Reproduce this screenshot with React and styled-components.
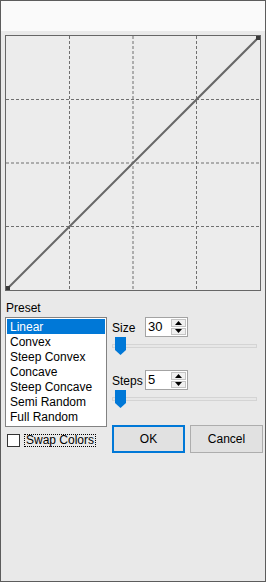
import React from "react";
import styled, { createGlobalStyle } from "styled-components";

const GlobalStyle = createGlobalStyle`
	html, body {
		margin: 0;
		padding: 0;
		background: #e9e9e9;
	}
	* {
		box-sizing: border-box;
	}
`;

const presets = [
	"Linear",
	"Convex",
	"Steep Convex",
	"Concave",
	"Steep Concave",
	"Semi Random",
	"Full Random",
];

// Curve preview (inner area is 254 x 254)
const CurveGraph = () => {
	const q = [63.5, 127, 190.5];
	return (
		<Graph>
			<svg width="254" height="254" viewBox="0 0 254 254">
				{q.map((v) => (
					<g key={v} stroke="#6f6f6f" strokeWidth="1" strokeDasharray="3 2">
						<line x1={v} y1="0" x2={v} y2="254" />
						<line x1="0" y1={v} x2="254" y2={v} />
					</g>
				))}
				<line x1="2" y1="252" x2="252" y2="2" stroke="#676767" strokeWidth="2" />
				<rect x="0" y="250" width="4" height="4" fill="#3a3a3a" />
				<rect x="250" y="0" width="4" height="4" fill="#3a3a3a" />
			</svg>
		</Graph>
	);
};

const Spinner = ({ value }) => (
	<SpinBox>
		<SpinValue>{value}</SpinValue>
		<SpinButtons>
			<SpinButton>
				<svg width="7" height="4" viewBox="0 0 7 4">
					<polygon points="0,4 7,4 3.5,0" fill="#000" />
				</svg>
			</SpinButton>
			<SpinButton>
				<svg width="7" height="4" viewBox="0 0 7 4">
					<polygon points="0,0 7,0 3.5,4" fill="#000" />
				</svg>
			</SpinButton>
		</SpinButtons>
	</SpinBox>
);

const Slider = () => (
	<SliderRow>
		<Track />
		<Thumb>
			<svg width="11" height="18" viewBox="0 0 11 18">
				<polygon points="0,0 11,0 11,13 5.5,18 0,13" fill="#0078d7" />
			</svg>
		</Thumb>
	</SliderRow>
);

const App = () => {
	return (
		<>
			<GlobalStyle />
			<Window>
				<TitleBar />
				<Body>
					<CurveGraph />
					<Lower>
						<LeftColumn>
							<Label>Preset</Label>
							<ListBox>
								{presets.map((p, i) => (
									<ListItem key={p} selected={i === 0}>
										{p}
									</ListItem>
								))}
							</ListBox>
							<CheckRow>
								<CheckBox />
								<FocusLabel>Swap Colors</FocusLabel>
							</CheckRow>
						</LeftColumn>
						<RightColumn>
							<FieldRow>
								<FieldLabel>Size</FieldLabel>
								<Spinner value="30" />
							</FieldRow>
							<Slider />
							<FieldRow spaced>
								<FieldLabel>Steps</FieldLabel>
								<Spinner value="5" />
							</FieldRow>
							<Slider />
							<Buttons>
								<Button primary>OK</Button>
								<Button>Cancel</Button>
							</Buttons>
						</RightColumn>
					</Lower>
				</Body>
			</Window>
		</>
	);
};

const Window = styled.div`
	width: 266px;
	height: 582px;
	border: 1px solid #5c5c5c;
	display: flex;
	flex-direction: column;
	font-family: "Liberation Sans", Arial, sans-serif;
	font-size: 12px;
	color: #000;
	background: #e9e9e9;
`;

const TitleBar = styled.div`
	height: 30px;
	background: #fafafa;
`;

const Body = styled.div`
	flex: 1;
	padding: 4px 0 0 4px;
	display: flex;
	flex-direction: column;
`;

const Graph = styled.div`
	width: 256px;
	height: 256px;
	border: 1px solid #666;
	background: #ececec;
	svg {
		display: block;
	}
`;

const Lower = styled.div`
	display: flex;
	gap: 5px;
	margin-top: 10px;
`;

const LeftColumn = styled.div`
	width: 102px;
	display: flex;
	flex-direction: column;
`;

const Label = styled.div`
	line-height: 14px;
	height: 14px;
	padding-left: 1px;
	margin-bottom: 2px;
`;

const ListBox = styled.div`
	height: 110px;
	border: 1px solid #828282;
	background: #fff;
	padding: 1px;
`;

const ListItem = styled.div`
	height: 15px;
	line-height: 14px;
	padding: 1px 0 0 3px;
	white-space: nowrap;
	background: ${(p) => (p.selected ? "#0078d7" : "transparent")};
	color: ${(p) => (p.selected ? "#fff" : "#000")};
`;

const CheckRow = styled.div`
	display: flex;
	align-items: center;
	margin-top: 7px;
	padding-left: 2px;
	gap: 4px;
`;

const CheckBox = styled.div`
	width: 13px;
	height: 13px;
	border: 1px solid #333;
	background: #fff;
`;

const FocusLabel = styled.div`
	border: 1px dotted #000;
	line-height: 11px;
	padding: 0 1px 0 1px;
`;

const RightColumn = styled.div`
	display: flex;
	flex-direction: column;
	padding-top: 16px;
`;

const FieldRow = styled.div`
	display: flex;
	align-items: center;
	margin-top: ${(p) => (p.spaced ? "15px" : "0")};
`;

const FieldLabel = styled.div`
	width: 33px;
	padding-top: 2px;
`;

const SpinBox = styled.div`
	width: 43px;
	height: 20px;
	border: 1px solid #a3a3a3;
	background: #fff;
	display: flex;
`;

const SpinValue = styled.div`
	flex: 1;
	padding: 2px 0 0 2px;
	line-height: 14px;
	font-size: 13px;
`;

const SpinButtons = styled.div`
	width: 16px;
	display: flex;
	flex-direction: column;
	padding: 1px 1px 1px 0;
	gap: 1px;
`;

const SpinButton = styled.div`
	flex: 1;
	background: #f0f0f0;
	border: 1px solid #c4c4c4;
	display: flex;
	align-items: center;
	justify-content: center;
	svg {
		display: block;
	}
`;

const SliderRow = styled.div`
	position: relative;
	width: 145px;
	height: 18px;
	display: flex;
	align-items: center;
`;

const Track = styled.div`
	width: 100%;
	height: 4px;
	background: #e7e7e7;
	border: 1px solid #d4d4d4;
`;

const Thumb = styled.div`
	position: absolute;
	left: 3px;
	top: 0;
	svg {
		display: block;
	}
`;

const Buttons = styled.div`
	display: flex;
	gap: 5px;
	margin-top: 17px;
`;

const Button = styled.div`
	width: 73px;
	height: 28px;
	display: flex;
	align-items: center;
	justify-content: center;
	background: #e1e1e1;
	border: ${(p) => (p.primary ? "2px solid #0078d7" : "1px solid #adadad")};
`;

export default App;
